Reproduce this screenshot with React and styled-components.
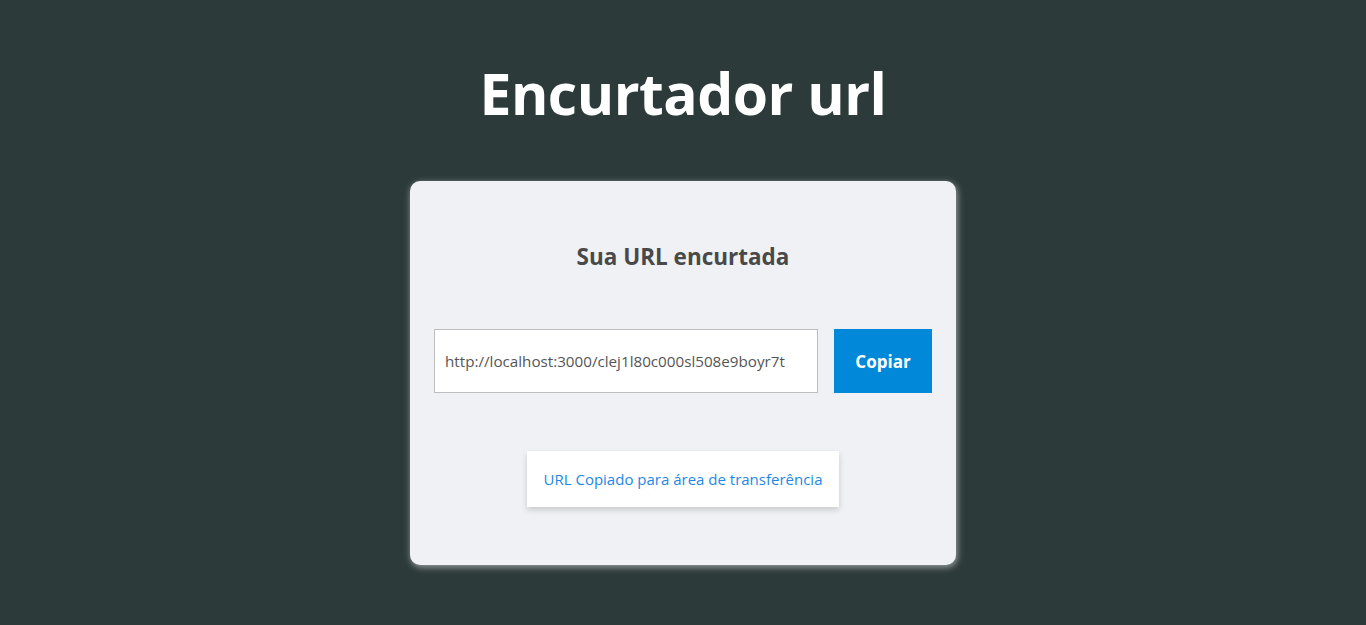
import React from "react";
import styled, { createGlobalStyle } from "styled-components";

const GlobalStyle = createGlobalStyle`
  * {
    box-sizing: border-box;
  }
  body {
    margin: 0;
    background-color: #2d3a3a;
    font-family: "Open Sans", "Noto Sans", sans-serif;
  }
`;

function App() {
  return (
    <Page>
      <GlobalStyle />
      <Title>Encurtador url</Title>
      <Card>
        <CardTitle>Sua URL encurtada</CardTitle>
        <Row>
          <UrlInput
            readOnly
            value="http://localhost:3000/clej1l80c000sl508e9boyr7t"
          />
          <CopyButton>Copiar</CopyButton>
        </Row>
        <Toast>URL Copiado para área de transferência</Toast>
      </Card>
    </Page>
  );
}

export default App;

const Page = styled.div`
  min-height: 625px;
  display: flex;
  flex-direction: column;
  align-items: center;
  padding-top: 55px;
`;

const Title = styled.h1`
  margin: 0;
  color: white;
  font-size: 57px;
  font-weight: 700;
  line-height: 76px;
  letter-spacing: -0.5px;
`;

const Card = styled.div`
  margin-top: 50px;
  width: 546px;
  height: 384px;
  background-color: #f0f1f5;
  border-radius: 10px;
  box-shadow: 1px 2px 7px rgba(255, 255, 255, 0.55);
  display: flex;
  flex-direction: column;
  align-items: center;
  padding: 60px 24px 0;
`;

const CardTitle = styled.h2`
  margin: 0;
  color: #494949;
  font-size: 22.5px;
  font-weight: 700;
  line-height: 32px;
`;

const Row = styled.div`
  margin-top: 56px;
  display: flex;
  gap: 16px;
  width: 100%;
`;

const UrlInput = styled.input`
  width: 384px;
  height: 64px;
  border: 1px solid #bdbdbd;
  background: white;
  padding: 0 10px;
  font-family: "Open Sans", "Noto Sans", sans-serif;
  font-size: 15.2px;
  color: #555;
  outline: none;
`;

const CopyButton = styled.button`
  width: 98px;
  height: 64px;
  border: none;
  background-color: #0288d9;
  color: white;
  font-family: "Open Sans", "Noto Sans", sans-serif;
  font-size: 17px;
  font-weight: 700;
  cursor: pointer;
`;

const Toast = styled.div`
  margin-top: 58px;
  background: white;
  padding: 0 17px;
  height: 56px;
  display: flex;
  align-items: center;
  color: #1e88e5;
  font-size: 15px;
  box-shadow: 0 3px 6px rgba(0, 0, 0, 0.16);
`;
